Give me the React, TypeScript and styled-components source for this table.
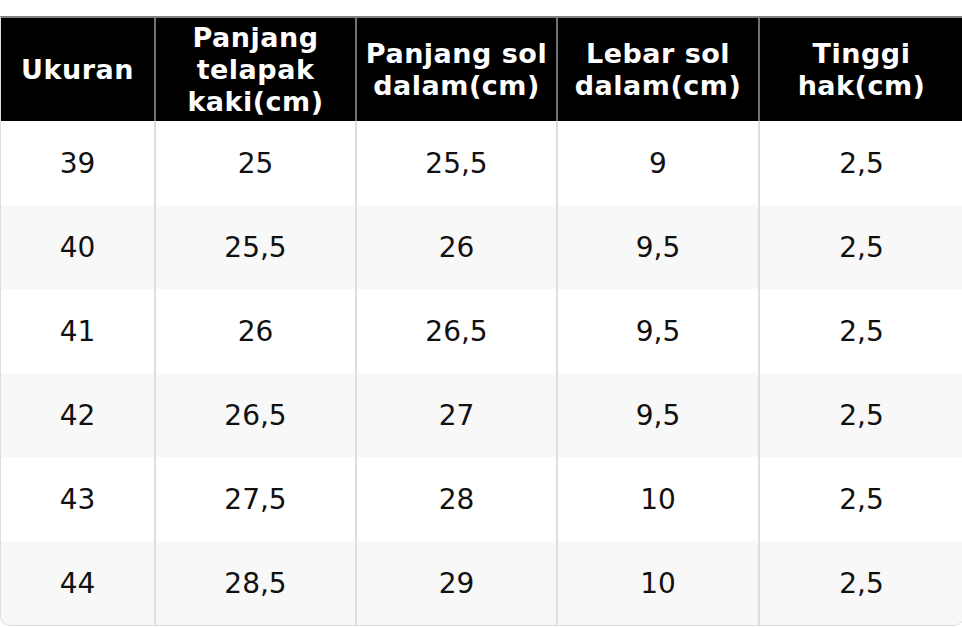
import React from "react";
import styled, { createGlobalStyle } from "styled-components";

const Global = createGlobalStyle`
  html, body { margin: 0; padding: 0; background: #ffffff; }
  body { font-family: "DejaVu Sans", Verdana, sans-serif; }
`;

const Page = styled.div`
  padding-top: 16px;
  width: 962px;
`;

const Table = styled.table`
  width: 962px;
  border-collapse: separate;
  border-spacing: 0;
  table-layout: fixed;
  border: 1px solid #dddddd;
  border-top: 2px solid #808080;
  border-radius: 0 0 10px 10px;
  overflow: hidden;
  font-family: "DejaVu Sans", Verdana, sans-serif;
`;

const HeadCell = styled.th`
  background: #000000;
  color: #ffffff;
  font-weight: bold;
  font-size: 27px;
  letter-spacing: 0.5px;
  line-height: 32px;
  height: 103px;
  padding: 0 2px;
  text-align: center;
  vertical-align: middle;
  border-right: 2px solid #707070;
  &:last-child { border-right: none; }
`;

const Row = styled.tr<{ $alt: boolean }>`
  background: ${(p) => (p.$alt ? "#f8f8f8" : "#ffffff")};
`;

const Cell = styled.td`
  height: 84px;
  padding: 0;
  text-align: center;
  vertical-align: middle;
  font-size: 28px;
  color: #111111;
  border-right: 2px solid #dedede;
  &:last-child { border-right: none; }
`;

const headers = [
  ["Ukuran"],
  ["Panjang", "telapak", "kaki(cm)"],
  ["Panjang sol", "dalam(cm)"],
  ["Lebar sol", "dalam(cm)"],
  ["Tinggi", "hak(cm)"],
];

const widths = [155, 201, 201, 202, 203];

const data = [
  ["39", "25", "25,5", "9", "2,5"],
  ["40", "25,5", "26", "9,5", "2,5"],
  ["41", "26", "26,5", "9,5", "2,5"],
  ["42", "26,5", "27", "9,5", "2,5"],
  ["43", "27,5", "28", "10", "2,5"],
  ["44", "28,5", "29", "10", "2,5"],
];

export default function App() {
  return (
    <Page>
      <Global />
      <Table>
        <colgroup>
          {widths.map((w, i) => (
            <col key={i} style={{ width: w }} />
          ))}
        </colgroup>
        <thead>
          <tr>
            {headers.map((lines, i) => (
              <HeadCell key={i}>
                {lines.map((l, j) => (
                  <React.Fragment key={j}>
                    {j > 0 && <br />}
                    {l}
                  </React.Fragment>
                ))}
              </HeadCell>
            ))}
          </tr>
        </thead>
        <tbody>
          {data.map((row, i) => (
            <Row key={i} $alt={i % 2 === 1}>
              {row.map((v, j) => (
                <Cell key={j}>{v}</Cell>
              ))}
            </Row>
          ))}
        </tbody>
      </Table>
    </Page>
  );
}
